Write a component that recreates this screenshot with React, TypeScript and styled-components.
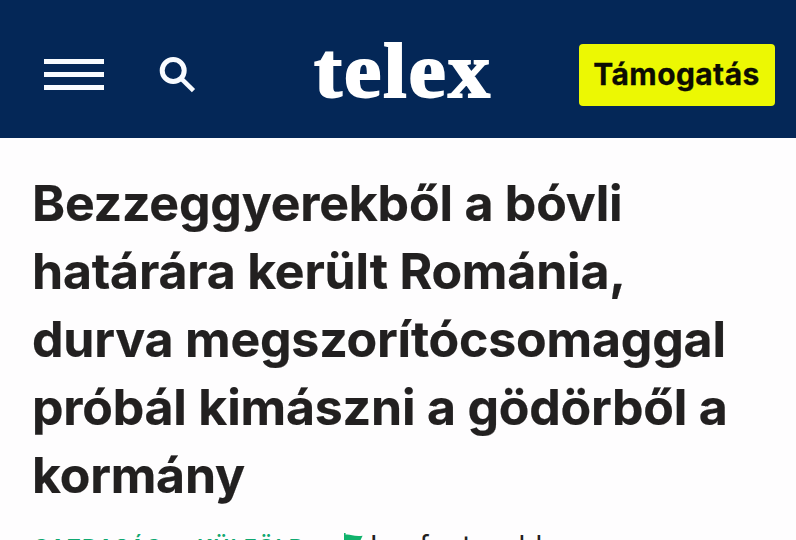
import styled, { createGlobalStyle } from "styled-components";

export default function App() {
  return (
    <>
      <GlobalStyle />
      <Page>
        <Header>
          <HeaderLeft>
            <MenuButton aria-label="Menü">
              <MenuBar />
              <MenuBar />
              <MenuBar />
            </MenuButton>
            <SearchButton aria-label="Keresés">
              <SearchIcon />
            </SearchButton>
          </HeaderLeft>
          <Logo>telex</Logo>
          <HeaderRight>
            <SupportButton>Támogatás</SupportButton>
          </HeaderRight>
        </Header>
        <Article>
          <Title>
            Bezzeggyerekből a bóvli határára került Románia, durva
            megszorítócsomaggal próbál kimászni a gödörből a kormány
          </Title>
          <Meta>
            <Tag $width={164}>Gazdaság</Tag>
            <Tag $width={147}>Külföld</Tag>
            <FlagIcon />
            <Highlight>Legfontosabb</Highlight>
          </Meta>
        </Article>
      </Page>
    </>
  );
}

function SearchIcon() {
  return (
    <svg width="38" height="38" viewBox="0 0 38 38" fill="none" stroke="#f8fbff">
      <circle cx="14.2" cy="14.5" r="11" strokeWidth="5" />
      <path d="M22.3 22.6 L34.5 34.6" strokeWidth="4.6" />
    </svg>
  );
}

function FlagIcon() {
  return (
    <Flag width="20" height="24" viewBox="0 0 20 24" fill="#10b26c">
      <path d="M0 0 H1.6 V24 H0 Z" />
      <path d="M1 1.8 C6 0.6 9 4 18.6 2.8 L15.8 8.5 L18.6 14.5 C10 16 7 12 1 14 Z" />
    </Flag>
  );
}

const GlobalStyle = createGlobalStyle`
  * {
    box-sizing: border-box;
  }

  body {
    margin: 0;
    background: #fefdfe;
    font-family: Inter, "Liberation Sans", sans-serif;
  }
`;

const Page = styled.div`
  width: 100%;
  height: 540px;
  overflow: hidden;
`;

const Header = styled.header`
  display: grid;
  grid-template-columns: 270px 1fr 196px;
  align-items: center;
  height: 138px;
  padding: 11px 21px 0 44px;
  background: #042757;
`;

const HeaderLeft = styled.div`
  display: flex;
  align-items: center;
  gap: 55px;
`;

const HeaderRight = styled.div`
  display: flex;
  justify-content: flex-end;
`;

const MenuButton = styled.button`
  display: flex;
  flex-direction: column;
  gap: 8px;
  width: 60px;
  padding: 0;
  border: 0;
  background: none;
`;

const MenuBar = styled.span`
  height: 5px;
  width: 100%;
  background: #f8fbff;
`;

const SearchButton = styled.button`
  display: flex;
  padding: 0;
  border: 0;
  background: none;
`;

const Logo = styled.div`
  padding-bottom: 11px;
  color: #fff;
  font-family: "Liberation Serif", serif;
  font-size: 84px;
  font-weight: 700;
  line-height: 84px;
  letter-spacing: 2px;
  -webkit-text-stroke: 2px #fff;
  transform: scaleY(0.94);
  transform-origin: 0 73px;
`;

const SupportButton = styled.button`
  width: 196px;
  height: 62px;
  padding: 0 1px 2px 0;
  border: 0;
  border-radius: 4px;
  background: #ecf803;
  color: #0c0c02;
  font-family: inherit;
  font-size: 30px;
  font-weight: 700;
  letter-spacing: 0.4px;
  -webkit-text-stroke: 0.3px #0c0c02;
`;

const Article = styled.main`
  padding: 31px 32px 0;
`;

const Title = styled.h1`
  margin: 0;
  color: #222020;
  font-size: 50px;
  font-weight: 700;
  line-height: 68px;
  letter-spacing: -0.2px;
  -webkit-text-stroke: 0.2px #222020;
`;

const Meta = styled.div`
  display: flex;
  align-items: flex-start;
  padding: 24px 0 0 1px;
  line-height: 28px;
`;

const Tag = styled.span<{ $width: number }>`
  width: ${({ $width }) => $width}px;
  color: #10a870;
  font-size: 22px;
  font-weight: 600;
  letter-spacing: 0.9px;
  text-transform: uppercase;
`;

const Flag = styled.svg`
  margin-right: 6px;
`;

const Highlight = styled.span`
  color: #222020;
  font-size: 28px;
  line-height: 26px;
`;
